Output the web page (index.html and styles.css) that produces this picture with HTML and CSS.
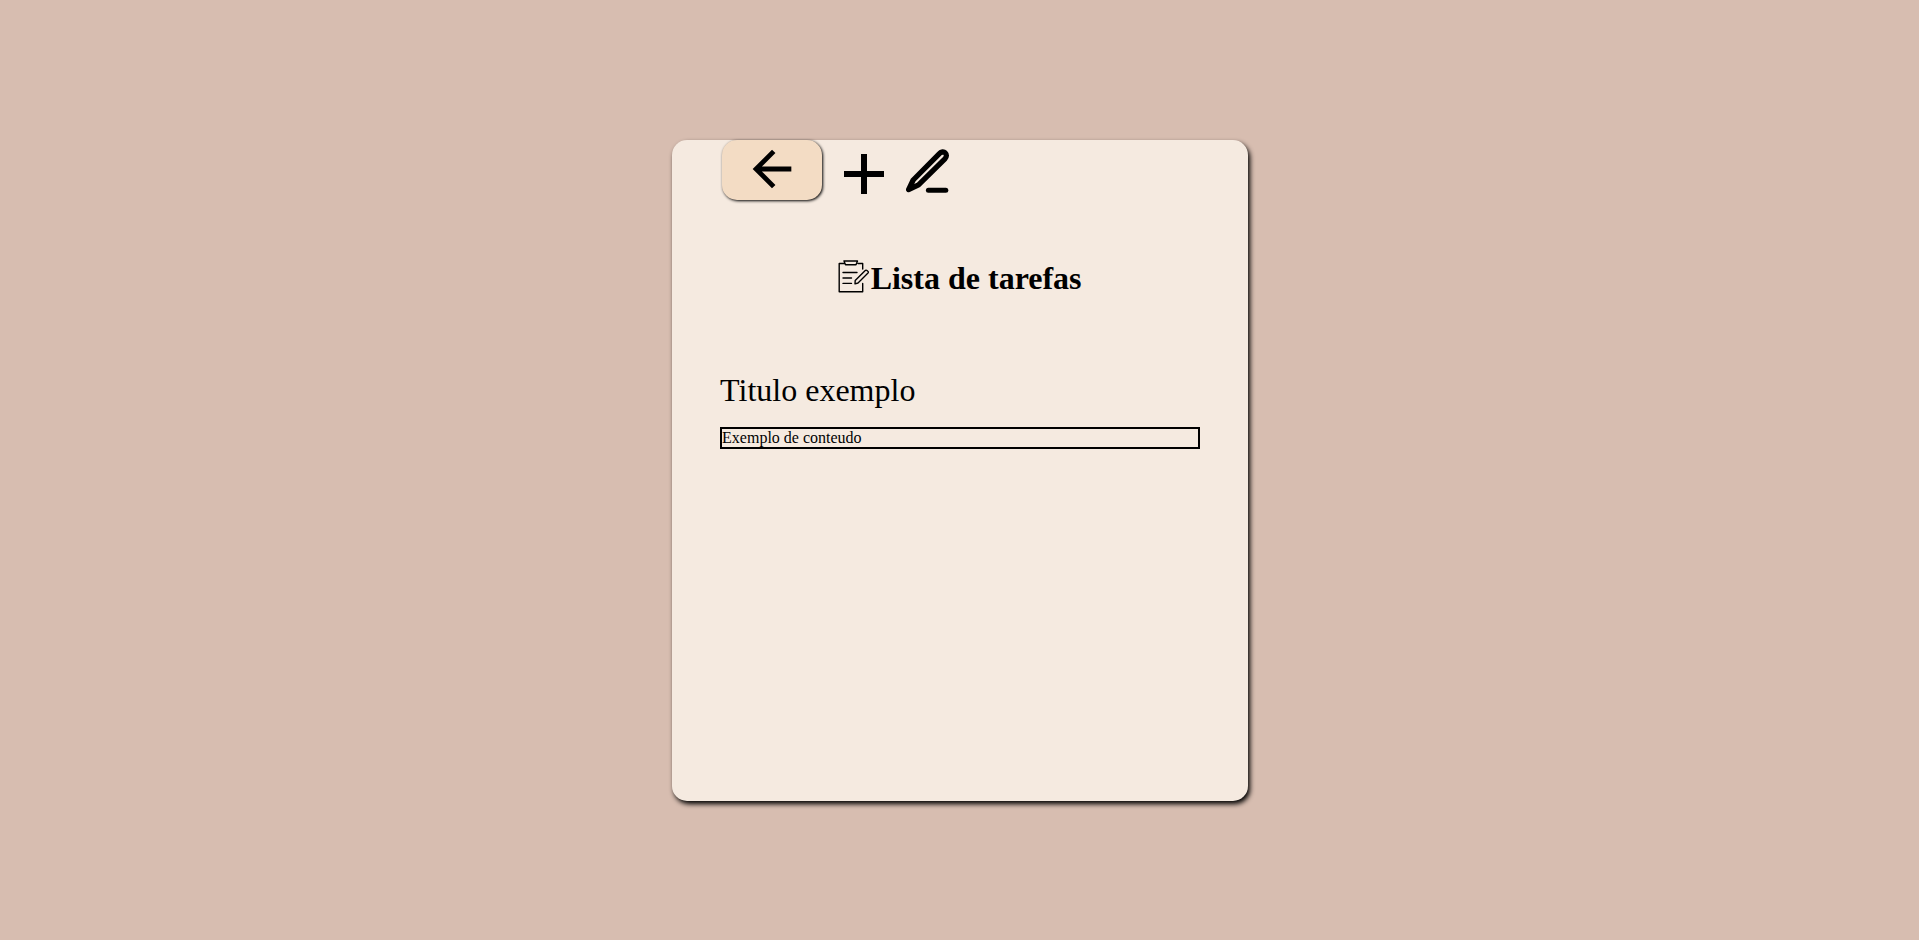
FILE: index.html
```html
<!DOCTYPE html>
<html lang="pt-br">
<head>
<meta charset="utf-8">
<title>Lista de tarefas</title>
<link rel="stylesheet" href="styles.css">
</head>
<body>
<main class="card">
  <nav class="toolbar">
    <button class="back" aria-label="Voltar">
      <svg width="58" height="58" viewBox="0 -960 960 960"><path d="m313-440 224 224-57 56-320-320 320-320 57 56-224 224h487v80H313Z"/></svg>
    </button>
    <svg class="plus" width="40" height="40" viewBox="0 0 40 40"><path d="M17 0h6v17h17v6H23v17h-6V23H0v-6h17z"/></svg>
    <svg class="pen" width="44" height="44" viewBox="0 0 44 44"><path class="outline" d="M2.6 40.6 7.2 31 33.4 4.6C35.2 2.6 37.9 2.6 39.2 3.9C40.8 5.4 40.8 7.9 38.9 9.8L12.5 35.9Z"/><path class="dash" d="M22.4 41.2H39.8"/></svg>
  </nav>
  <h1 class="heading">
    <svg width="32" height="33" viewBox="0 0 32 33"><path d="M6 3.5H1.2V31.7H24.7V23.5M20 3.5H24.7V9M6 1H19.5L18 4.7H7.5ZM5 12.5H19M5 18H13.5M5 23.4H13.5M17.2 20.5 27.5 10.3Q28.3 9.8 29.6 11Q30.9 12 30 13L20 23 17 23.9Z"/></svg><span>Lista de tarefas</span>
  </h1>
  <h2 class="task-title">Titulo exemplo</h2>
  <p class="task-content">Exemplo de conteudo</p>
</main>
</body>
</html>
```
FILE: styles.css
```css
* { box-sizing: border-box; margin: 0; padding: 0; }
body {
  height: 100vh;
  padding-top: 140px;
  background: #d7bdb0;
  color: #000;
  font-family: "Liberation Serif", "Times New Roman", serif;
}
.card {
  width: 576px;
  height: 661px;
  margin: 0 auto;
  padding: 0 48px;
  border-radius: 15px;
  background: #f5eae0;
  box-shadow: 2px 3px 5px #000;
}
.toolbar { display: flex; height: 60px; padding-left: 2px; }
.back {
  display: flex;
  justify-content: center;
  width: 100px;
  height: 60px;
  border: 0;
  border-radius: 15px;
  background: #f3dcc4;
  box-shadow: 1px 1px 3px #000;
}
.plus { margin: 14px 0 0 22px; }
.pen { margin: 9px 0 0 22px; }
.outline { fill: none; stroke: #000; stroke-width: 5.3; stroke-linejoin: round; }
.dash { fill: none; stroke: #000; stroke-width: 5; stroke-linecap: round; }
.heading {
  display: flex;
  justify-content: center;
  gap: 0.6px;
  height: 36px;
  margin-top: 60px;
  padding-left: 0.6px;
  font-size: 32px;
  line-height: 36px;
}
.heading svg { fill: none; stroke: #000; stroke-width: 1.4; stroke-linejoin: round; stroke-linecap: round; }
.task-title { margin-top: 76px; padding-left: 0.6px; font-size: 32px; font-weight: 400; line-height: 36px; }
.task-content { margin-top: 19px; padding-left: 0.6px; border: 2px solid #000; font-size: 16px; line-height: 18px; }
```
